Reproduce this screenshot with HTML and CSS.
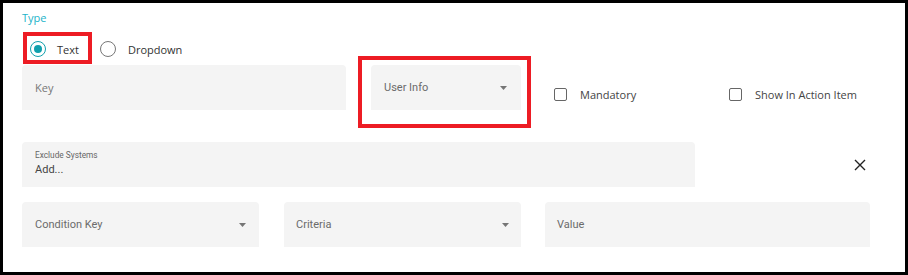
FILE: index.html
```html
<!DOCTYPE html>
<html lang="en">
<head>
  <meta charset="UTF-8" />
  <title>Field settings</title>
  <link rel="stylesheet" href="styles.css">
</head>
<body>
  <div class="panel">
    <div class="type-label">Type</div>
    <div class="radio-row">
      <label class="radio checked marked"><span class="dot"></span>Text</label>
      <label class="radio"><span class="dot"></span>Dropdown</label>
    </div>

    <div class="row row-top">
      <div class="field field-key"><span class="ph">Key</span></div>
      <div class="field field-select field-user marked">
        <span>User Info</span>
        <svg class="caret" width="7" height="4" viewBox="0 0 7 4"><path d="M0 0 L7 0 L3.5 4 Z" fill="#757575"/></svg>
      </div>
      <label class="check"><span class="box"></span>Mandatory</label>
      <label class="check"><span class="box"></span>Show In Action Item</label>
    </div>

    <div class="row row-exclude">
      <div class="field field-chips">
        <span class="mini">Exclude Systems</span>
        <span class="add">Add...</span>
      </div>
      <svg class="close" width="12" height="12" viewBox="0 0 12 12">
        <path d="M1 1 L11 11 M11 1 L1 11" stroke="#222" stroke-width="1.4" fill="none"/>
      </svg>
    </div>

    <div class="row row-cond">
      <div class="field field-select field-cond">
        <span>Condition Key</span>
        <svg class="caret" width="7" height="4" viewBox="0 0 7 4"><path d="M0 0 L7 0 L3.5 4 Z" fill="#757575"/></svg>
      </div>
      <div class="field field-select field-criteria">
        <span>Criteria</span>
        <svg class="caret" width="7" height="4" viewBox="0 0 7 4"><path d="M0 0 L7 0 L3.5 4 Z" fill="#757575"/></svg>
      </div>
      <div class="field field-value"><span>Value</span></div>
    </div>
  </div>
</body>
</html>
```

FILE: styles.css
```css
body {
  margin: 0;
  background: #fff;
}
.panel {
  width: 908px;
  height: 275px;
  box-sizing: border-box;
  border: 3px solid #000;
  padding: 7px 0 0 19px;
  font-family: 'Open Sans', Arial, sans-serif;
  font-size: 11px;
  color: #333;
}
.type-label {
  color: #22b3c9;
  line-height: 15px;
}
.radio-row {
  display: flex;
  align-items: center;
  height: 16px;
  margin-top: 16px;
  padding-left: 8px;
}
.radio {
  position: relative;
  display: flex;
  align-items: center;
  gap: 11px;
  line-height: 15px;
}
.radio + .radio {
  margin-left: 21px;
  gap: 12px;
}
.radio .dot {
  width: 16px;
  height: 16px;
  box-sizing: border-box;
  border: 1px solid #777;
  border-radius: 50%;
  position: relative;
}
.radio.checked .dot {
  border: 1.5px solid #11a0ad;
}
.radio.checked .dot::after {
  content: '';
  position: absolute;
  left: 2.5px;
  top: 2.5px;
  width: 8px;
  height: 8px;
  border-radius: 50%;
  background: #11a0ad;
}
.marked {
  position: relative;
}
.marked::after {
  content: '';
  position: absolute;
  border: 4px solid #ed1c24;
  pointer-events: none;
}
.radio.marked::after {
  left: -7px;
  right: -13px;
  top: -9px;
  bottom: -7px;
}
.field-user.marked::after {
  left: -13px;
  right: -10px;
  top: -9px;
  bottom: -18px;
}
.row {
  display: flex;
  align-items: flex-start;
}
.row-top {
  margin-top: 8px;
}
.row-exclude {
  margin-top: 32px;
  align-items: center;
}
.row-cond {
  margin-top: 15px;
}
.field {
  height: 45px;
  box-sizing: border-box;
  background: #f4f4f4;
  border-radius: 4px 4px 0 0;
  display: flex;
  align-items: center;
  padding: 0 13px;
  font-family: Roboto, 'Liberation Sans', sans-serif;
  font-size: 11px;
  color: #6b6b6b;
}
.field-select {
  justify-content: space-between;
  padding-right: 12px;
}
.field-key {
  width: 324px;
  font-family: 'Open Sans', Arial, sans-serif;
  color: #777;
}
.field-user {
  width: 150px;
  margin-left: 25px;
  padding-right: 14px;
}
.check {
  display: flex;
  align-items: center;
  gap: 13px;
  margin-top: 22px;
  line-height: 15px;
  color: #444;
}
.check:nth-of-type(1) {
  width: 175px;
  margin-left: 33px;
}
.check .box {
  width: 13px;
  height: 13px;
  box-sizing: border-box;
  border: 1px solid #666;
  border-radius: 2px;
}
.field-chips {
  width: 673px;
  flex-direction: column;
  align-items: flex-start;
  justify-content: flex-start;
  padding-top: 8px;
}
.mini {
  font-size: 8.3px;
  color: #666;
}
.add {
  margin-top: 3px;
  color: #444;
}
.close {
  margin-left: 159px;
}
.field-cond,
.field-criteria {
  width: 237px;
}
.field-cond {
  padding-right: 13px;
}
.field-criteria {
  margin-left: 25px;
  padding-left: 12px;
}
.field-value {
  width: 325px;
  margin-left: 24px;
  padding-left: 12px;
}
```
